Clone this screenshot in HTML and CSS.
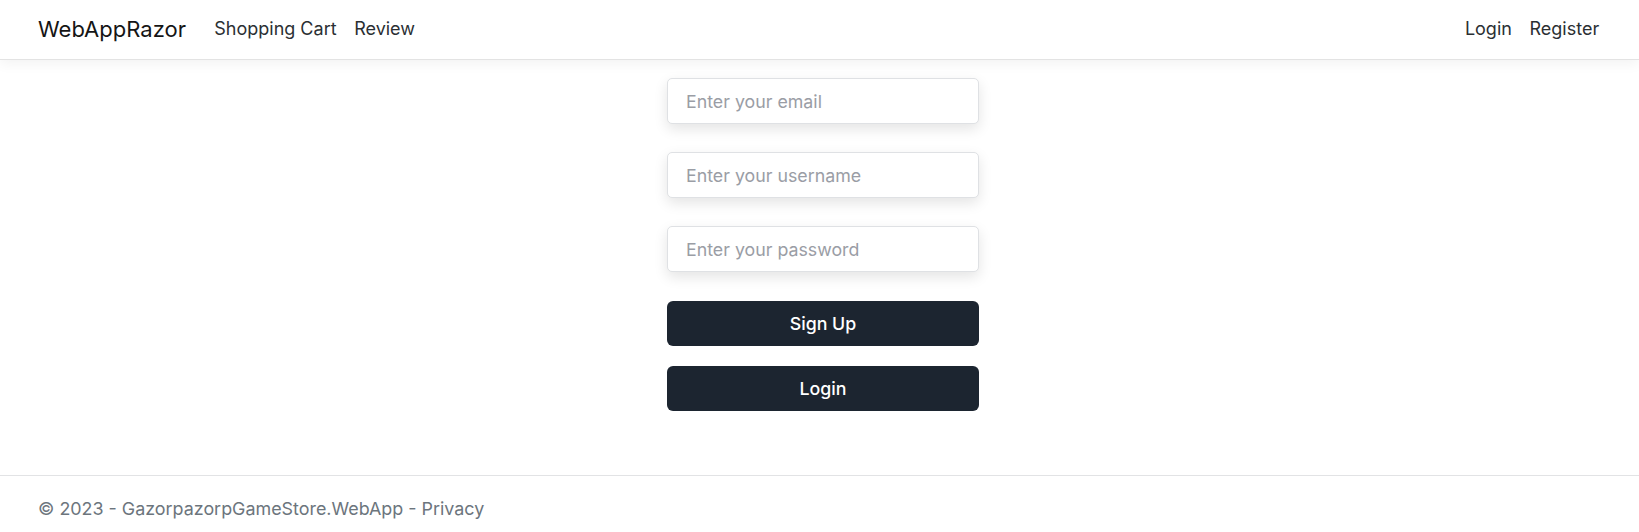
FILE: index.html
```html
<!DOCTYPE html>
<html lang="en">
<head>
<meta charset="utf-8">
<title>WebAppRazor</title>
<link rel="stylesheet" href="styles.css">
</head>
<body>
<header class="navbar">
  <div class="nav-left">
    <a class="brand" href="#">WebAppRazor</a>
    <nav class="nav">
      <a class="nav-link" href="#">Shopping Cart</a>
      <a class="nav-link" href="#">Review</a>
    </nav>
  </div>
  <nav class="nav">
    <a class="nav-link" href="#">Login</a>
    <a class="nav-link" href="#">Register</a>
  </nav>
</header>
<main class="main">
  <form class="form">
    <input class="field" type="email" placeholder="Enter your email">
    <input class="field" type="text" placeholder="Enter your username">
    <input class="field" type="password" placeholder="Enter your password">
    <button class="btn btn-first" type="button">Sign Up</button>
    <button class="btn" type="button">Login</button>
  </form>
</main>
<footer class="footer">
  &copy; 2023 - GazorpazorpGameStore.WebApp - <a class="footer-link" href="#">Privacy</a>
</footer>
</body>
</html>
```
FILE: styles.css
```css
* { box-sizing: border-box; }
html, body { margin: 0; padding: 0; }
body {
  font-family: Inter, "Noto Sans", sans-serif;
  font-size: 17.6px;
  color: #212529;
  background: #fff;
  overflow: hidden;
}
a { text-decoration: none; }

.navbar {
  height: 60px;
  display: flex;
  align-items: center;
  justify-content: space-between;
  padding: 0 31px 2px 38px;
  border-bottom: 1px solid #e3e3e3;
  box-shadow: 0 4px 12px rgba(0, 0, 0, 0.05);
  background: #fff;
  position: relative;
}
.nav-left { display: flex; align-items: center; }
.brand {
  font-size: 22px;
  color: #151515;
  margin-right: 19.5px;
}
.nav { display: flex; align-items: center; }
.nav-link {
  color: #2b2f33;
  font-size: 18px;
  padding: 0 8.8px;
  line-height: 26px;
}

.main {
  display: flex;
  justify-content: center;
  padding: 18px 0 0 7px;
  height: 415px;
}
.form {
  width: 312px;
  display: flex;
  flex-direction: column;
}
.field {
  height: 46px;
  margin-bottom: 28px;
  border: 1px solid #dfe1e4;
  border-radius: 5px;
  padding: 0 18px;
  font-family: inherit;
  font-size: 17.8px;
  color: #212529;
  background: #fff;
  box-shadow: 0 5px 14px rgba(0, 0, 0, 0.11);
  outline: none;
}
.field::placeholder { color: #9a9da5; }
.btn {
  height: 45px;
  border: none;
  border-radius: 6px;
  background: #1c2530;
  color: #fff;
  font-family: inherit;
  font-size: 17.8px;
  font-weight: 500;
  cursor: pointer;
}
.btn-first { margin-top: 1px; margin-bottom: 20px; }

.footer {
  border-top: 1px solid #e2e3e5;
  line-height: 66px;
  padding-left: 38px;
  font-size: 17.9px;
  color: #6c757d;
}
.footer-link { color: #6c757d; }
```
